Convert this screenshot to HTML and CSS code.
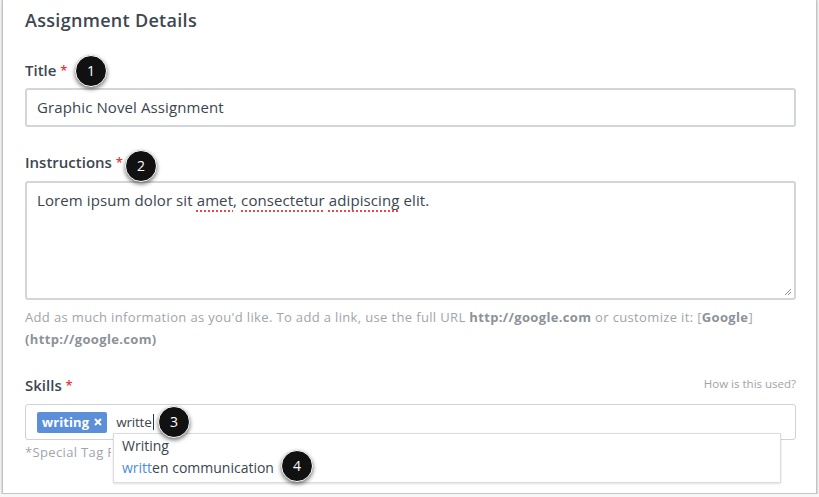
FILE: index.html
```html
<!DOCTYPE html>
<html lang="en">
<head>
    <meta charset="UTF-8">
    <title>Assignment Details</title>
    <link rel="stylesheet" href="styles.css">
</head>
<body>
    <div class="card">
        <h2 class="card-title">Assignment Details</h2>

        <div class="field">
            <div class="label">Title <span class="req">*</span></div>
            <div class="input">Graphic Novel Assignment</div>
        </div>

        <div class="field">
            <div class="label">Instructions <span class="req">*</span></div>
            <div class="textarea">
                Lorem ipsum dolor sit <span class="typo">amet</span>, <span class="typo">consectetur</span> <span class="typo">adipiscing</span> elit.
                <svg class="grip" width="8" height="8" viewBox="0 0 8 8">
                    <path d="M7 1L1 7M7 4L4 7" stroke="#888" stroke-width="1" fill="none"/>
                </svg>
            </div>
            <p class="help">Add as much information as you'd like. To add a link, use the full URL <b>http://google.com</b> or customize it: [<b>Google</b>]<br><b>(http://google.com)</b></p>
        </div>

        <div class="field skills">
            <div class="label-row">
                <div class="label">Skills <span class="req">*</span></div>
                <a class="hint">How is this used?</a>
            </div>
            <div class="input tags">
                <span class="tag">writing
                    <svg class="tag-x" width="8" height="8" viewBox="0 0 8 8">
                        <path d="M1 1L7 7M7 1L1 7" stroke="#fff" stroke-width="2" fill="none"/>
                    </svg>
                </span>
                <span class="typed">writte</span><span class="caret"></span>
            </div>
            <p class="help small">*Special Tag Formatting</p>
            <ul class="dropdown">
                <li>Writing</li>
                <li><span class="match">writt</span>en communication</li>
            </ul>
        </div>

        <span class="badge" style="left: 72px; top: 55px">1</span>
        <span class="badge" style="left: 122px; top: 150px">2</span>
        <span class="badge" style="left: 155px; top: 406px">3</span>
        <span class="badge" style="left: 278px; top: 450px">4</span>
    </div>
</body>
</html>
```

FILE: styles.css
```css
body {
    margin: 0;
    background-color: #f7f7f7;
    font-family: "Open Sans", "Liberation Sans", sans-serif;
    color: #3c4650;
}

.card {
    position: relative;
    box-sizing: border-box;
    height: 495px;
    margin: -1px 2px 0 2px;
    padding: 8px 20px 0 22px;
    background-color: #fff;
    border: 1px solid #c4c4c4;
    box-shadow: 0 1px 2px rgba(0, 0, 0, 0.35);
}

.card-title {
    margin: 0;
    font-size: 18px;
    font-weight: 600;
    line-height: 24px;
    letter-spacing: 0.3px;
    color: #3d4751;
}

.field {
    margin-top: 25px;
}

.field:first-of-type {
    margin-top: 28px;
}

.label {
    font-size: 15px;
    font-weight: 600;
    line-height: 20px;
}

.req {
    color: #e0393e;
    font-size: 13px;
    vertical-align: top;
}

.input,
.textarea {
    box-sizing: border-box;
    margin-top: 8px;
    border: 2px solid #d3d6d9;
    border-radius: 3px;
    background-color: #fff;
    font-size: 15px;
    letter-spacing: 0.1px;
    color: #3b4550;
}

.input {
    height: 39px;
    padding: 0 10px;
    line-height: 35px;
}

.textarea {
    position: relative;
    height: 119px;
    margin-top: 9px;
    padding: 6px 10px;
    line-height: 22px;
}

.typo {
    text-decoration: underline dotted #e8484d;
    text-decoration-thickness: 2px;
    text-underline-offset: 4px;
}

.grip {
    position: absolute;
    right: 2px;
    bottom: 2px;
}

.help {
    margin: 6px 0 0;
    font-size: 13px;
    line-height: 22px;
    letter-spacing: 0.35px;
    color: #a0a5aa;
}

.help b {
    font-weight: 700;
    color: #8c9298;
}

.label-row {
    display: flex;
    justify-content: space-between;
    align-items: center;
}

.hint {
    font-size: 11.5px;
    color: #a0a4a8;
    margin-top: -4px;
}

.skills {
    position: relative;
}

.tags {
    display: flex;
    align-items: center;
    height: 36px;
    margin-top: 9px;
    padding: 0 11px;
    border-width: 1px;
    border-color: #cfd3d6;
}

.tag {
    display: inline-flex;
    align-items: center;
    gap: 5px;
    height: 21px;
    padding: 0 5px 0 5px;
    border-radius: 2px;
    background-color: #5b8fd8;
    color: #fff;
    font-size: 13px;
    font-weight: 700;
    line-height: 21px;
}

.typed {
    margin-left: 9px;
    font-size: 13.5px;
    letter-spacing: -0.2px;
    color: #3b4550;
}

.caret {
    width: 1px;
    height: 16px;
    margin-left: 1px;
    background-color: #333;
}

.help.small {
    width: 86px;
    margin-top: 3px;
    line-height: 18px;
    white-space: nowrap;
    overflow: hidden;
}

.dropdown {
    position: absolute;
    left: 88px;
    right: 15px;
    top: 58px;
    margin: 0;
    padding: 1px 0 3px;
    list-style: none;
    background-color: #fff;
    border: 1px solid #dcdcdc;
    box-shadow: 0 1px 2px rgba(0, 0, 0, 0.12);
}

.dropdown li {
    padding: 0 8px;
    font-size: 14px;
    line-height: 22px;
    color: #3b4550;
}

.match {
    color: #4a8ddb;
}

.badge {
    position: absolute;
    box-sizing: border-box;
    width: 32px;
    height: 32px;
    border: 1.5px solid #fff;
    border-radius: 50%;
    background-color: #111;
    color: #fff;
    font-size: 14px;
    line-height: 29px;
    text-align: center;
    box-shadow: 0 2px 4px rgba(0, 0, 0, 0.55);
}
```
